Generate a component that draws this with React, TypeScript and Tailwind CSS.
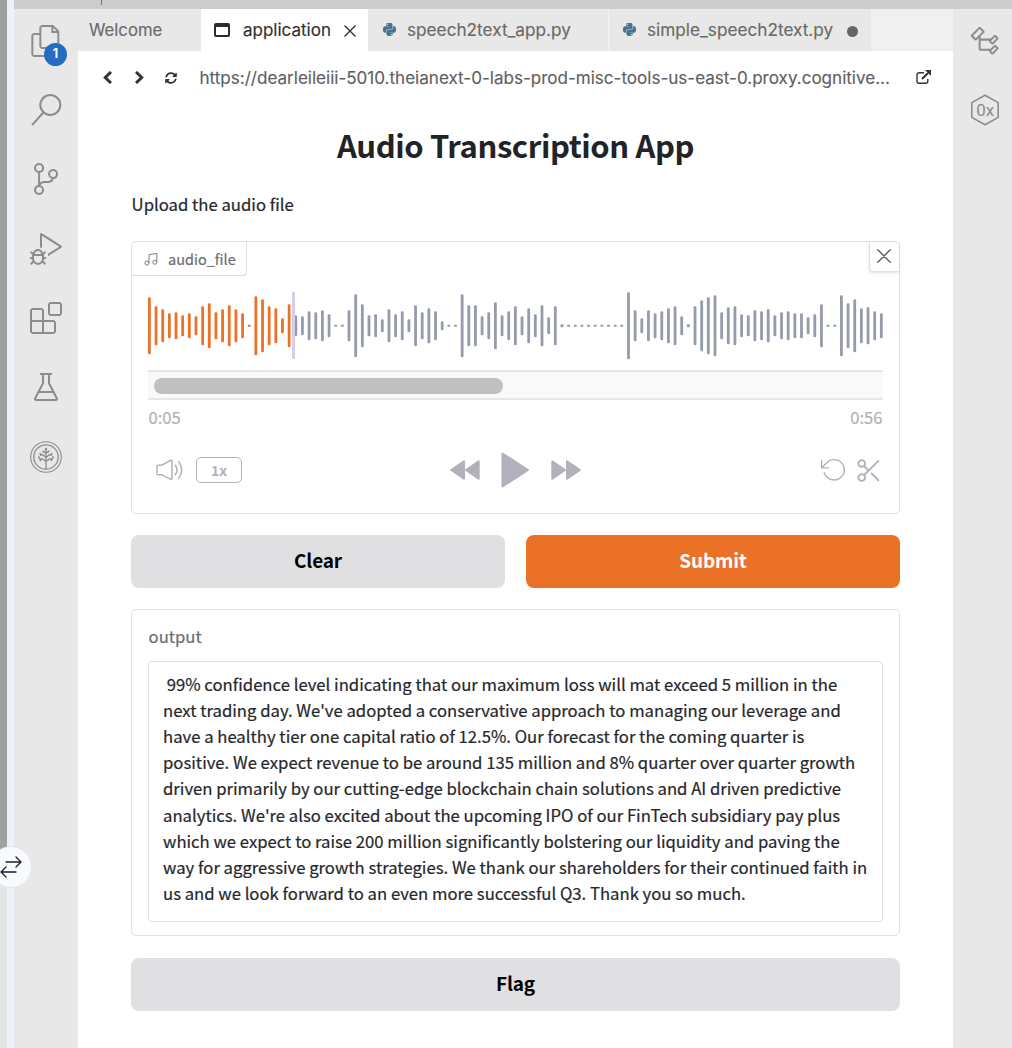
import React from "react";
import { VscFiles, VscSearch, VscSourceControl, VscDebugAlt, VscExtensions, VscBeaker, VscSymbolClass } from "react-icons/vsc";
import { FaPython, FaSyncAlt } from "react-icons/fa";

const BARS = [
  57, 39, 33, 25, 27, 21, 25, 19, 39, 45, 27, 33, 41, 33, 25, 2, 59, 53, 39, 35, 15, 43, 21, 19, 29, 27, 31, 23,
  2, 2, 31, 63, 43, 21, 23, 13, 33, 23, 29, 13, 41, 27, 35, 29, 9, 2, 2, 63, 41, 41, 19, 27, 47, 21, 29, 39, 19,
  35, 23, 41, 17, 39, 3, 2, 2, 2, 2, 2, 2, 2, 2, 2, 67, 31, 15, 31, 25, 29, 35, 39, 19, 3, 39, 51, 57, 61, 27,
  37, 39, 23, 21, 31, 29, 33, 21, 27, 29, 25, 25, 17, 23, 43, 2, 2, 61, 45, 53, 35, 37, 29, 25,
];
const PLAYED = 22;

function Waveform() {
  return (
    <svg className="block h-[68px] w-[735px]" viewBox="0 0 735 68">
      {BARS.map((h, i) => (
        <rect
          key={i}
          x={i * 6.654}
          y={33.7 - h / 2}
          width={2.8}
          height={h}
          rx={h > 3 ? 1.2 : 0.3}
          fill={i < PLAYED ? "#eb7228" : "#959bab"}
        />
      ))}
      <rect x={144} y={0} width={3} height={67} rx={1} fill="#d5cdea" />
    </svg>
  );
}

function TreeBadge() {
  return (
    <svg className="size-8" viewBox="0 0 32 32" fill="none" stroke="currentColor" strokeWidth="1.1" strokeLinecap="round">
      <circle cx="16" cy="16" r="15.3" />
      <circle cx="16" cy="16" r="12.2" strokeWidth="1.3" />
      <path d="M16 28V9M16 20.500l-3.600-2.500H9.500M16 20.500l3.600-2.500h2.900M16 16.500l-3-2.500H10.500M16 16.500l3-2.500h2.500M16 12.500l-2-1.700M16 12.500l2-1.700" strokeWidth="1.3" />
      <g fill="currentColor" stroke="none">
        <circle cx="16" cy="8" r="1.2" />
        <circle cx="13.300" cy="10.400" r="1" />
        <circle cx="18.700" cy="10.400" r="1" />
        <circle cx="10.500" cy="13.200" r="1.1" />
        <circle cx="21.500" cy="13.200" r="1.1" />
        <circle cx="9" cy="16.200" r="1" />
        <circle cx="23" cy="16.200" r="1" />
        <circle cx="10.500" cy="19.300" r="1" />
        <circle cx="21.500" cy="19.300" r="1" />
      </g>
    </svg>
  );
}

function ActivityBar() {
  return (
    <aside className="flex w-16 flex-col items-center gap-[37.3px] bg-[#e8e8e8] pt-4 text-[32px] text-[#8c8c8c]">
      <div className="relative">
        <VscFiles />
        <span className="absolute left-[14px] top-[18px] flex size-[23px] items-center justify-center rounded-full bg-[#246bc4] font-[Inter,sans-serif] text-[12.500px] font-bold leading-none text-white">
          1
        </span>
      </div>
      <VscSearch />
      <VscSourceControl className="-mt-px mb-px" />
      <VscDebugAlt />
      <VscExtensions />
      <VscBeaker />
      <TreeBadge />
    </aside>
  );
}

function RightBar() {
  return (
    <aside className="flex w-[59px] flex-col items-center bg-[#e8e8e8] pl-1 pt-4 text-[#8c8c8c]">
      <VscSymbolClass className="size-8" />
      <svg className="mt-[37px] size-8" viewBox="0 0 32 32" fill="none" stroke="currentColor">
        <path d="M16 1.200 29.200 8.600V23.400L16 30.800 2.800 23.400V8.600Z" strokeWidth="1.600" strokeLinejoin="round" />
        <text x="16.200" y="22" textAnchor="middle" fill="currentColor" stroke="none" className="font-[Roboto,sans-serif] text-[17px]">
          0x
        </text>
      </svg>
    </aside>
  );
}

function Tabs() {
  return (
    <div className="flex h-[42px] bg-[#f0f0f0] text-[17px] text-[#6a6a6a] [-webkit-text-stroke:0.15px]">
      <div className="flex w-[122.500px] items-center bg-[#e8e8e8] pl-[11px] pt-px text-[16.700px]">Welcome</div>
      <div className="flex w-[167.500px] items-center bg-white pl-[13.500px] text-[#2f2f2f]">
        <svg className="h-[14px] w-4" viewBox="0 0 16 14">
          <rect x="1" y="1" width="14" height="12" rx="1" fill="none" stroke="#2c2c2c" strokeWidth="2" />
          <path d="M1 1h14v3H1z" fill="#2c2c2c" />
        </svg>
        <span className="ml-[13px] w-[101px] pt-px">application</span>
        <svg className="mt-0.5 size-3" viewBox="0 0 12 12" stroke="#2c2c2c" strokeWidth="1.300">
          <path d="m.5.5 11 11M11.500.5l-11 11" />
        </svg>
      </div>
      <div className="flex w-[241px] items-center border-r border-[#f3f3f3] bg-[#e8e8e8] pl-[14px] text-[17.200px]">
        <FaPython className="mb-px size-[15px] text-[#47728c]" />
        <span className="ml-[10px]">speech2text_app.py</span>
      </div>
      <div className="flex w-[262px] items-center bg-[#e8e8e8] pl-[13px] text-[17.200px]">
        <FaPython className="mb-px size-[15px] text-[#47728c]" />
        <span className="ml-[10px] w-[199.500px]">simple_speech2text.py</span>
        <span className="mt-0.5 size-[11px] rounded-full bg-[#666666]" />
      </div>
    </div>
  );
}

function AddressBar() {
  return (
    <div className="flex h-[53px] items-center pl-[25px] text-[17.060px] text-[#5f5f5f] [-webkit-text-stroke:0.15px]">
      <svg className="h-[13px] w-[9px]" viewBox="0 0 9 13" fill="none" stroke="#333" strokeWidth="3">
        <path d="M8 1 2.300 6.500 8 12" />
      </svg>
      <svg className="ml-[22.500px] h-[13px] w-[9px]" viewBox="0 0 9 13" fill="none" stroke="#333" strokeWidth="3">
        <path d="m1 1 5.700 5.500L1 12" />
      </svg>
      <FaSyncAlt className="ml-[21.500px] size-3 text-[#333]" />
      <span className="ml-[22.500px] w-[716.500px] whitespace-nowrap">
        https://dearleileiii-5010.theianext-0-labs-prod-misc-tools-us-east-0.proxy.cognitive...
      </span>
      <svg className="mb-px size-[15px]" viewBox="0 0 15 15" fill="none" stroke="#333">
        <path d="M8 2.800H3a2 2 0 0 0-2 2V11.300a2 2 0 0 0 2 2h6.800a2 2 0 0 0 2-2V9" strokeWidth="1.400" />
        <path d="m6 9 6-6" strokeWidth="2.200" />
        <path d="M9 0h6v6z" fill="#333" stroke="none" />
      </svg>
    </div>
  );
}

function AudioCard() {
  return (
    <section className="h-[273px] rounded-[5px] border border-[#dfdfe2]">
      <div className="flex items-start justify-between">
        <div className="flex h-[34px] w-[115px] items-center rounded-br-[4px] border-b border-r border-[#dfdfe2] pl-3 text-[14.500px] text-[#6c6c75] [-webkit-text-stroke:0.2px]">
          <svg className="size-[14px]" viewBox="0 0 24 24" fill="none" stroke="currentColor" strokeWidth="1.500">
            <path d="M8.500 19V4.500L22 2.500V17" />
            <circle cx="5" cy="19" r="3.500" />
            <circle cx="18.500" cy="17.500" r="3.500" />
          </svg>
          <span className="ml-[10px]">audio_file</span>
        </div>
        <div className="flex h-[30px] w-[30px] items-center justify-center rounded-bl-[4px] border-b border-l border-[#dfdfe2] pb-px pr-px shadow-sm">
          <svg className="size-[14px]" viewBox="0 0 14 14" stroke="#63636b" strokeWidth="1.500" strokeLinecap="round">
            <path d="m.800.800 12.400 12.400M13.200.800.800 13.200" />
          </svg>
        </div>
      </div>
      <div className="mt-4 pl-4">
        <Waveform />
      </div>
      <div className="mx-4 mt-[10px] flex h-[30px] items-start border-y-2 border-[#e6e6e6] bg-[#f9f9f9] pl-1.5 pt-1.5">
        <div className="h-4 w-[349px] rounded-full bg-[#c0c0c0]" />
      </div>
      <div className="mx-4 mt-1 flex h-[26px] items-center justify-between text-[16.600px] text-[#b0b0b8] [-webkit-text-stroke:0.2px]">
        <span className="pl-[0.500px]">0:05</span>
        <span className="pr-[0.500px]">0:56</span>
      </div>
      <div className="mx-4 mt-[22px] grid h-9 grid-cols-3 items-center text-[#b1b1bb]">
        <div className="flex items-center gap-[13px] pl-[7px]">
          <svg className="h-[22px] w-7" viewBox="0 0 28 22" fill="none" stroke="currentColor" strokeWidth="1.500" strokeLinecap="round" strokeLinejoin="round">
            <path d="M3.500 6.300H6.500L15.300 1.500Q17 .9 17 2.500V18.500Q17 20.900 15.300 20.100L6.500 15.700H3.500Q1.500 15.700 1.900 13.500Q2.500 11 1.900 8.500Q1.500 6.300 3.500 6.300Z" />
            <path d="M20.300 6.200q3.400 4.700 0 9.600M23.700 2.800q6 8 0 16.400" />
          </svg>
          <span className="flex h-[26px] w-[46px] items-center justify-center rounded-[5px] border border-[#b1b1bb] text-[14px] font-bold leading-none">
            1x
          </span>
        </div>
        <div className="flex items-center justify-center gap-[21px]">
          <svg className="h-5 w-[30px]" viewBox="0 0 30 20" fill="currentColor" stroke="currentColor" strokeWidth="2" strokeLinejoin="round">
            <path d="M14 1.200v17.600L1.200 10ZM28.700 1.200v17.600L16 10Z" />
          </svg>
          <svg className="h-9 w-[29px]" viewBox="0 0 29 36" fill="currentColor" stroke="currentColor" strokeWidth="2" strokeLinejoin="round">
            <path d="M1.500 1.500v33L27 18Z" />
          </svg>
          <svg className="h-5 w-[30px]" viewBox="0 0 30 20" fill="currentColor" stroke="currentColor" strokeWidth="2" strokeLinejoin="round">
            <path d="M1.300 1.200v17.600L14 10ZM16 1.200v17.600L28.800 10Z" />
          </svg>
        </div>
        <div className="flex items-center justify-end gap-[9px] pr-px">
          <svg className="size-[26px]" viewBox="0 0 24 24" fill="none" stroke="currentColor" strokeWidth="1.300" strokeLinecap="round" strokeLinejoin="round">
            <path d="M1.500 3v7h6.500" />
            <path d="M4 14.500a9.400 9.400 0 1 0 1.800-8.700L1.500 10" />
          </svg>
          <svg className="size-[27px]" viewBox="0 0 24 24" fill="none" stroke="currentColor" strokeWidth="1.700" strokeLinecap="round">
            <circle cx="6" cy="5.800" r="3" />
            <circle cx="6" cy="18.200" r="3" />
            <path d="M20.800 3.500 8.100 16M14.800 14.700l6 6M8.100 8l3.900 3.900" />
          </svg>
        </div>
      </div>
    </section>
  );
}

const OUTPUT_LINES = [
  " 99% confidence level indicating that our maximum loss will mat exceed 5 million in the",
  "next trading day. We've adopted a conservative approach to managing our leverage and",
  "have a healthy tier one capital ratio of 12.5%. Our forecast for the coming quarter is",
  "positive. We expect revenue to be around 135 million and 8% quarter over quarter growth",
  "driven primarily by our cutting-edge blockchain chain solutions and AI driven predictive",
  "analytics. We're also excited about the upcoming IPO of our FinTech subsidiary pay plus",
  "which we expect to raise 200 million significantly bolstering our liquidity and paving the",
  "way for aggressive growth strategies. We thank our shareholders for their continued faith in",
  "us and we look forward to an even more successful Q3. Thank you so much.",
];

const BUTTON = "flex h-[53px] items-center justify-center rounded-lg pb-[2px] text-[19px] font-bold tracking-[-0.15px]";

function AudioApp() {
  return (
    <main className="flex flex-col px-[53px] font-['Noto_Sans_CJK_SC',sans-serif] text-[#26272b]">
      <h1 className="mt-[18px] h-[45px] whitespace-nowrap text-center text-[31px] font-bold leading-[45px] tracking-[-0.4px] text-[#222326]">
        Audio Transcription App
      </h1>
      <p className="mb-[24px] mt-[24px] h-[26px] pl-[0.600px] text-[16.700px] leading-[26px] [-webkit-text-stroke:0.2px]">
        Upload the audio file
      </p>
      <AudioCard />
      <div className="mt-[21px] grid grid-cols-2 gap-[21px]">
        <button className={BUTTON + " bg-[#e0e0e2] text-black"}>Clear</button>
        <button className={BUTTON + " bg-[#eb7127] text-white"}>Submit</button>
      </div>
      <section className="mt-[21px] h-[327px] rounded-[5px] border border-[#dfdfe2] px-4 pt-[13px] [-webkit-text-stroke:0.2px]">
        <div className="h-[26px] pl-[0.600px] text-[16.650px] leading-[26px] text-[#6c6c75]">output</div>
        <div className="mt-3 h-[261px] whitespace-pre rounded-[4px] border border-[#dfdfe2] pl-3.5 pt-[9px] text-[16.710px] leading-[26.110px]">
          {OUTPUT_LINES.join("\n")}
        </div>
      </section>
      <button className={BUTTON + " mt-[22px] bg-[#e0e0e2] text-black"}>Flag</button>
    </main>
  );
}

export default function App() {
  return (
    <div className="relative flex h-[1048px] w-[1012px] overflow-hidden bg-white font-[Inter,sans-serif]">
      <div className="flex w-[7px] flex-col bg-[#e4e4e4]">
        <div className="h-[867px] bg-[#a0a0a0]" />
      </div>
      <div className="w-[7px] bg-[#edf1f8]" />
      <div className="flex flex-1 flex-col">
        <div className="h-[9px] bg-[#cdcdcd] pl-[87px]">
          <div className="h-[5px] w-px bg-[#777]" />
        </div>
        <div className="flex flex-1">
          <ActivityBar />
          <div className="flex flex-1 flex-col">
            <Tabs />
            <AddressBar />
            <AudioApp />
          </div>
          <RightBar />
        </div>
      </div>
      <div className="absolute -left-[10px] top-[846px] flex size-[42px] items-center justify-center rounded-full border border-[#e2e5ea] bg-[#f8fafc]">
        <svg className="size-[22px]" viewBox="0 0 22 22" fill="none" stroke="#1b1e33" strokeWidth="1.300" strokeLinecap="round" strokeLinejoin="round">
          <path d="M6 6h15M16 1l5 5-5 5M16 16H1M6 11l-5 5 5 5" />
        </svg>
      </div>
    </div>
  );
}
